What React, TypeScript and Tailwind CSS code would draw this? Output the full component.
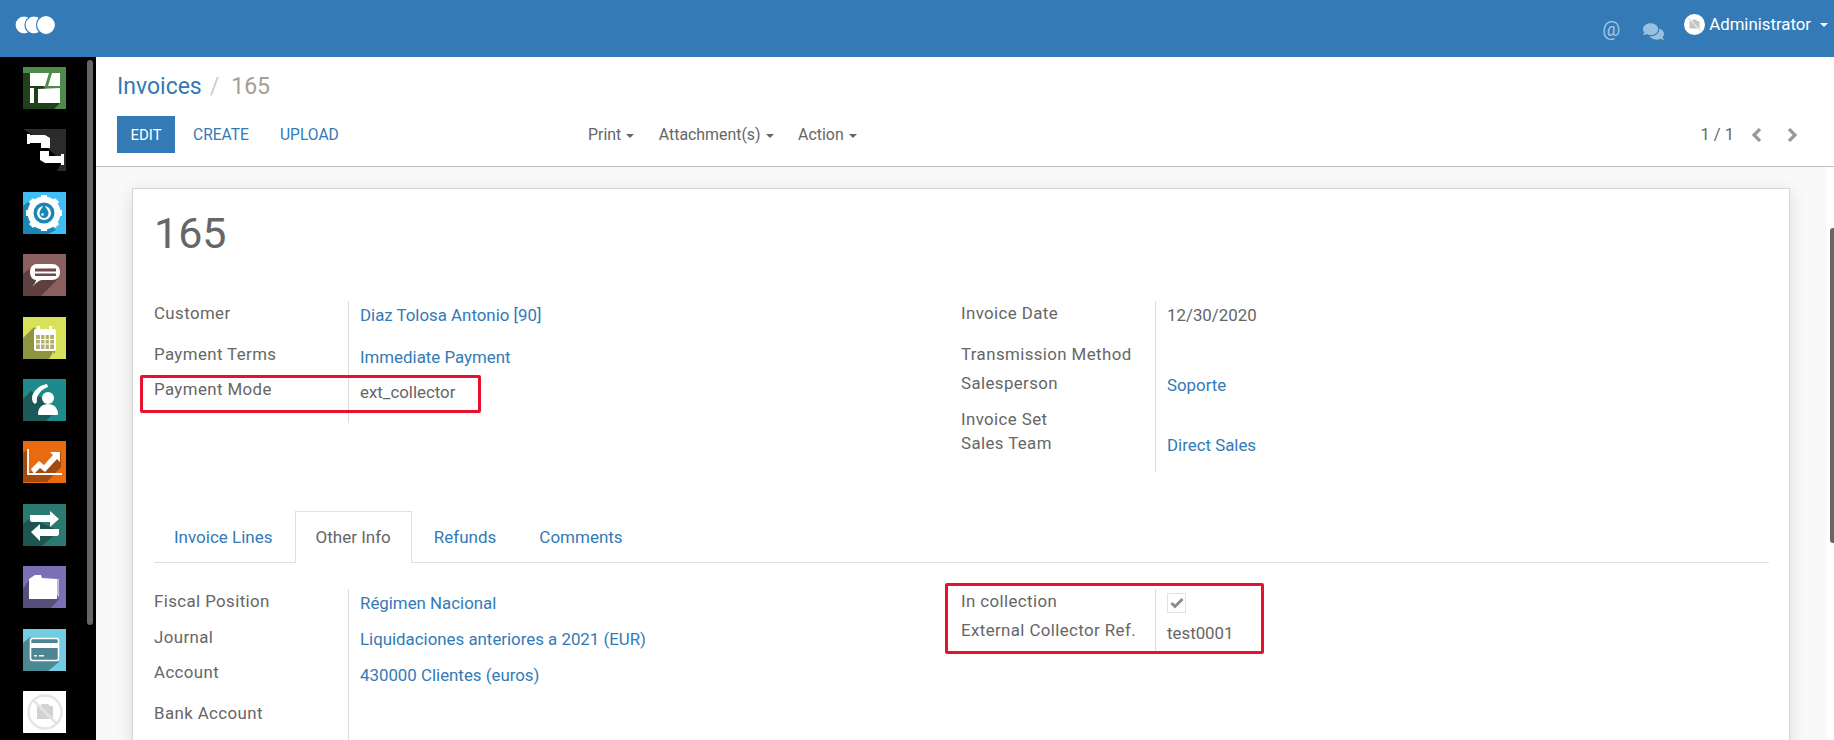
import { FaComments } from 'react-icons/fa';
import type { ReactNode } from 'react';

const Tile = ({ bg, shade, shadow, children }: { bg: string; shade: string; shadow: string; children: ReactNode }) => (
  <svg width="43" height="42" viewBox="0 0 43 42" className="block shrink-0">
    <rect width="43" height="42" fill={bg} />
    <polygon points={shadow} fill={shade} />
    {children}
  </svg>
);

const appIcons = [
  <Tile key="a" bg="#4f8a4b" shade="#1f4019" shadow="0,6 7,6 37,36 31,42 0,42">
    <path d="M7 6h19l-4 13H7zM29 6h8v13H25zM7 21h4v15H7zM15 22l22-1v15H15z" fill="#fff" />
  </Tile>,
  <Tile key="b" bg="#2b2b2b" shade="#000" shadow="0,0 8,5 39,32 34,42 0,42">
    <path d="M4 5h3v1h15l5 3v10h-9v-5H7v1H4zM17 22h9v5h12v-2h3v11h-3v-2H22l-5-3z" fill="#fff" />
  </Tile>,
  <Tile key="c" bg="#40bdf5" shade="#1a86b3" shadow="0,14 5,10 33,38 25,42 0,42">
    <circle cx="21" cy="21" r="16.500" fill="#fff" />
    <g stroke="#fff" strokeWidth="6">
      <path d="M21 3v36M3 21h36M8 8l26 26M34 8L8 34" />
    </g>
    <circle cx="21" cy="21" r="10.500" fill="#1a86b3" />
    <circle cx="21" cy="21" r="7" fill="#fff" />
    <path d="M21 13c3 4 4.500 6 4.500 8.500a4.500 4.500 0 0 1-9 0c0-2.500 1.500-4.500 4.500-8.500z" fill="#1a86b3" />
    <circle cx="19.500" cy="22.500" r="1.300" fill="#fff" />
  </Tile>,
  <Tile key="d" bg="#8a5f5f" shade="#5e4040" shadow="0,20 8,14 36,24 18,42 0,42">
    <path d="M14 10h15c5 0 8 3 8 8s-3 8-8 8H19c-3 0-6 3-9 6-1 0 3-3 3-6-3 0-6-3-6-8s3-8 7-8z" fill="#fff" />
    <rect x="12" y="14.500" width="21" height="3" fill="#6e4a4a" />
    <rect x="12" y="19.500" width="21" height="2.500" fill="#6e4a4a" />
  </Tile>,
  <Tile key="e" bg="#d9e05a" shade="#8f9440" shadow="0,21 11,10 32,37 32,32 26,42 0,42">
    <rect x="11" y="12" width="22" height="22" rx="2" fill="#fff" />
    <rect x="14" y="9" width="3" height="6" fill="#fff" />
    <rect x="26" y="9" width="3" height="6" fill="#fff" />
    <path d="M13 18h18v14H13z" fill="#b3ae6e" />
    <path d="M13 22.500h18M13 27h18M17.500 18v14M22 18v14M26.500 18v14" stroke="#fff" strokeWidth="1.200" />
  </Tile>,
  <Tile key="f" bg="#1f8a8a" shade="#1c5a5a" shadow="0,20 8,12 35,30 23,42 0,42">
    <path d="M24 5c-8 1-15 8-15 14 0 3 1 5 3 6l2-2c-1-6 3-12 11-15z" fill="#fff" />
    <circle cx="25" cy="19" r="6" fill="#fff" />
    <path d="M15 35c0-6 4-10 10-10s10 4 10 10c0 1-1 1-2 1H17c-1 0-2 0-2-1z" fill="#fff" />
  </Tile>,
  <Tile key="g" bg="#ea6a10" shade="#a34a10" shadow="0,12 5,8 5,32 15,28 38,10 38,26 24,41 0,41">
    <path d="M5 8v25h34" stroke="#fff" strokeWidth="1.800" fill="none" />
    <path d="M8 28l8-8 5 4 9-10-3-3h10v10l-3-3-12 13-5-4-6 6z" fill="#fff" />
  </Tile>,
  <Tile key="h" bg="#2a7a72" shade="#1f5551" shadow="0,20 8,14 36,27 19,42 0,42">
    <path d="M7 11h20V7l9 8-9 8v-5H9c-1 0-2-1-2-2zM36 25H17v-5l-9 8 9 9v-5h17c1 0 2-1 2-3z" fill="#fff" />
  </Tile>,
  <Tile key="i" bg="#7b70b5" shade="#55507a" shadow="0,23 6,14 36,33 28,42 0,42">
    <path d="M6 13l6-4h6l1 3 15 1v20l3-4-3 4H6z" fill="#fff" />
    <path d="M35 13v16l1 1" stroke="#fff" strokeWidth="1" fill="none" />
  </Tile>,
  <Tile key="j" bg="#72cde0" shade="#4c8794" shadow="0,14 7,8 36,33 25,42 0,42">
    <rect x="7.500" y="9.500" width="28" height="22" rx="2" fill="#4f8592" stroke="#fff" strokeWidth="1.600" />
    <rect x="8" y="14" width="27" height="5" fill="#fff" />
    <rect x="11" y="26" width="3" height="1.500" fill="#fff" />
    <rect x="16" y="26" width="5" height="1.500" fill="#fff" />
  </Tile>,
  <Tile key="k" bg="#fff" shade="#fff" shadow="0,0 0,0 0,0">
    <path d="M14 15h3l2-2h6l2 2h3v13H14z" fill="#d2d2d2" />
    <circle cx="22" cy="21" r="16.500" fill="none" stroke="#e4e4e4" strokeWidth="2.500" />
    <path d="M10 9l24 24" stroke="#e4e4e4" strokeWidth="2.500" />
  </Tile>,
];

const Caret = ({ className }: { className: string }) => (
  <span className={`inline-block ml-[5px] align-middle border-x-[4px] border-t-[4px] border-x-transparent ${className}`} />
);

const Chevron = ({ points, className }: { points: string; className: string }) => (
  <svg width="10" height="14" viewBox="0 0 10 14" className={className}>
    <polyline points={points} fill="none" stroke="#999" strokeWidth="3.200" />
  </svg>
);

const Label = ({ children }: { children: ReactNode }) => (
  <div className="w-[194px] shrink-0 leading-[24px] tracking-[0.4px] text-[#666] whitespace-nowrap">{children}</div>
);

const Row = ({ label, value, link, h, lift }: { label: string; value?: ReactNode; link?: boolean; h: string; lift: string }) => (
  <div className={`flex ${h}`}>
    <Label>{label}</Label>
    <div className={`pl-[11px] border-l border-[#dcdcdc] leading-[24px] ${lift} ${link ? 'text-[#337ab7]' : 'text-[#666]'}`}>{value}</div>
  </div>
);

const App = () => {
  return (
    <div className="relative h-screen overflow-hidden flex flex-col bg-white font-['Roboto',sans-serif] text-[16.850px] text-[#666]">
      <header className="h-[57px] shrink-0 flex items-center bg-[#337ab7] text-white">
        <svg width="44" height="22" viewBox="0 0 44 22" className="ml-[13px] mb-[8px]">
          <g fill="#fff" stroke="#337ab7" strokeWidth="1.200">
            <circle cx="11" cy="11" r="9" />
            <circle cx="21" cy="11" r="9" />
            <circle cx="33" cy="11" r="9.500" />
          </g>
        </svg>
        <div className="ml-auto flex items-center pr-[6px]">
          <span className="text-[20px] text-[#a6c7e3] mr-[23px]">@</span>
          <FaComments className="text-[21px] text-[#9ac0e0] mt-[6px] mr-[20px]" />
          <svg width="21" height="21" viewBox="0 0 21 21" className="mb-[9px] mr-[4px]">
            <circle cx="10.500" cy="10.500" r="10.500" fill="#fff" />
            <path d="M5.500 7h2.500l1-1.500h3l1 1.500h2.500v7.500H5.500z" fill="#c4c4c4" />
            <path d="M4 4l13 13" stroke="#e4e4e4" strokeWidth="1.400" />
          </svg>
          <span className="mb-[7px] text-[16.800px]">Administrator</span>
          <Caret className="mb-[8px] ml-[9px] border-t-white" />
        </div>
      </header>

      <div className="flex flex-1 min-h-0">
        <nav className="relative w-[96px] shrink-0 bg-black overflow-hidden pl-[23px] pt-[10px] flex flex-col gap-[20.400px]">
          {appIcons}
          <div className="absolute left-[87px] top-[3px] w-[6px] h-[565px] rounded-[3px] bg-[#666]" />
        </nav>

        <main className="flex-1 min-w-0 flex flex-col">
          <div className="h-[110px] shrink-0 border-b border-[#bdbdbd] pl-[21px] pr-[37px] pt-[15px]">
            <div className="h-[30px] leading-[30px] text-[23px]">
              <span className="text-[#337ab7]">Invoices</span>
              <span className="text-[#ccc] ml-[8px]">/</span>
              <span className="text-[#a59e97] ml-[12px]">165</span>
            </div>
            <div className="mt-[14px] flex items-center h-[37px] text-[15.900px]">
              <div className="w-[471px] flex items-center">
                <button className="h-[37px] w-[58px] pt-[1px] bg-[#337ab7] text-white uppercase text-[15px]">Edit</button>
                <button className="ml-[18px] pt-[2px] text-[#337ab7] uppercase text-[15.600px]">Create</button>
                <button className="ml-[31px] pt-[2px] text-[#337ab7] uppercase text-[15.600px]">Upload</button>
              </div>
              <div className="flex items-center gap-[24.500px] pt-[1px]">
                <span>Print<Caret className="border-t-[#666]" /></span>
                <span>Attachment(s)<Caret className="border-t-[#666]" /></span>
                <span>Action<Caret className="border-t-[#666]" /></span>
              </div>
              <div className="ml-auto flex items-center">
                <span className="pt-[1px] text-[16.500px]">1 / 1</span>
                <Chevron points="8,1 2,7 8,13" className="ml-[18px]" />
                <Chevron points="2,1 8,7 2,13" className="ml-[25px]" />
              </div>
            </div>
          </div>

          <div className="relative flex-1 min-h-0 bg-[#f9f9f9] overflow-hidden pl-[36px] pt-[21px]">
            <div className="w-[1658px] h-[600px] bg-white border border-[#d6d6d6] shadow-[0_4px_16px_rgba(0,0,0,0.12)] pl-[21px] pr-[20px] pt-[20px]">
              <h1 className="h-[71px] leading-[48px] text-[43px] text-[#666]">165</h1>

              <section className="mt-[21px] grid grid-cols-[807px_1fr]">
                <div>
                  <Row label="Customer" value="Diaz Tolosa Antonio [90]" link h="h-[41px]" lift="pt-[2px]" />
                  <Row label="Payment Terms" value="Immediate Payment" link h="h-[35px]" lift="pt-[3px]" />
                  <Row label="Payment Mode" value="ext_collector" h="h-[46px]" lift="pt-[3px]" />
                </div>
                <div>
                  <Row label="Invoice Date" value="12/30/2020" h="h-[41px]" lift="pt-[2px]" />
                  <Row label="Transmission Method" h="h-[29px]" lift="" />
                  <Row label="Salesperson" value="Soporte" link h="h-[36px]" lift="pt-[2px]" />
                  <Row label="Invoice Set" h="h-[24px]" lift="" />
                  <Row label="Sales Team" value="Direct Sales" link h="h-[41px]" lift="pt-[2px]" />
                </div>
              </section>

              <div className="mt-[39px] h-[52px] flex border-b border-[#dfdfdf]">
                <a className="px-[20px] mr-[2px] leading-[52px] text-[17px] text-[#337ab7]">Invoice Lines</a>
                <a className="relative h-[52px] px-[20px] mr-[1px] leading-[50px] text-[17px] bg-white border-x border-t border-[#dfdfdf]">Other Info</a>
                <a className="px-[21px] mr-[1px] leading-[52px] text-[17px] text-[#337ab7]">Refunds</a>
                <a className="px-[21px] leading-[52px] text-[17px] text-[#337ab7]">Comments</a>
              </div>

              <section className="mt-[26px] grid grid-cols-[807px_1fr]">
                <div>
                  <Row label="Fiscal Position" value="Régimen Nacional" link h="h-[36px]" lift="pt-[2px]" />
                  <Row label="Journal" value="Liquidaciones anteriores a 2021 (EUR)" link h="h-[35px]" lift="pt-[2px]" />
                  <Row label="Account" value="430000 Clientes (euros)" link h="h-[41px]" lift="pt-[3px]" />
                  <Row label="Bank Account" h="h-[60px]" lift="" />
                </div>
                <div>
                  <Row
                    label="In collection"
                    value={
                      <span className="mt-[4px] flex items-center justify-center w-[19px] h-[20px] border border-[#e2e2e2]">
                        <svg width="14" height="12" viewBox="0 0 14 12">
                          <path d="M1.500 6l3.500 3.500L12.500 2" fill="none" stroke="#8c8c8c" strokeWidth="3" />
                        </svg>
                      </span>
                    }
                    h="h-[29px]"
                    lift=""
                  />
                  <Row label="External Collector Ref." value="test0001" h="h-[35px]" lift="pt-[3px]" />
                </div>
              </section>
            </div>

            <div className="absolute right-0 top-0 bottom-0 w-[7px] bg-white" />
            <div className="absolute right-0 top-[61px] w-[4px] h-[315px] rounded-l-[3px] bg-[#666]" />
          </div>
        </main>
      </div>

      {/* red annotation boxes drawn over the screenshot */}
      <div className="absolute left-[140px] top-[375px] w-[341px] h-[38px] border-[3px] border-[#e8112d] rounded-[2px]" />
      <div className="absolute left-[945px] top-[583px] w-[319px] h-[71px] border-[3px] border-[#e8112d] rounded-[2px]" />
    </div>
  );
};

export default App;
